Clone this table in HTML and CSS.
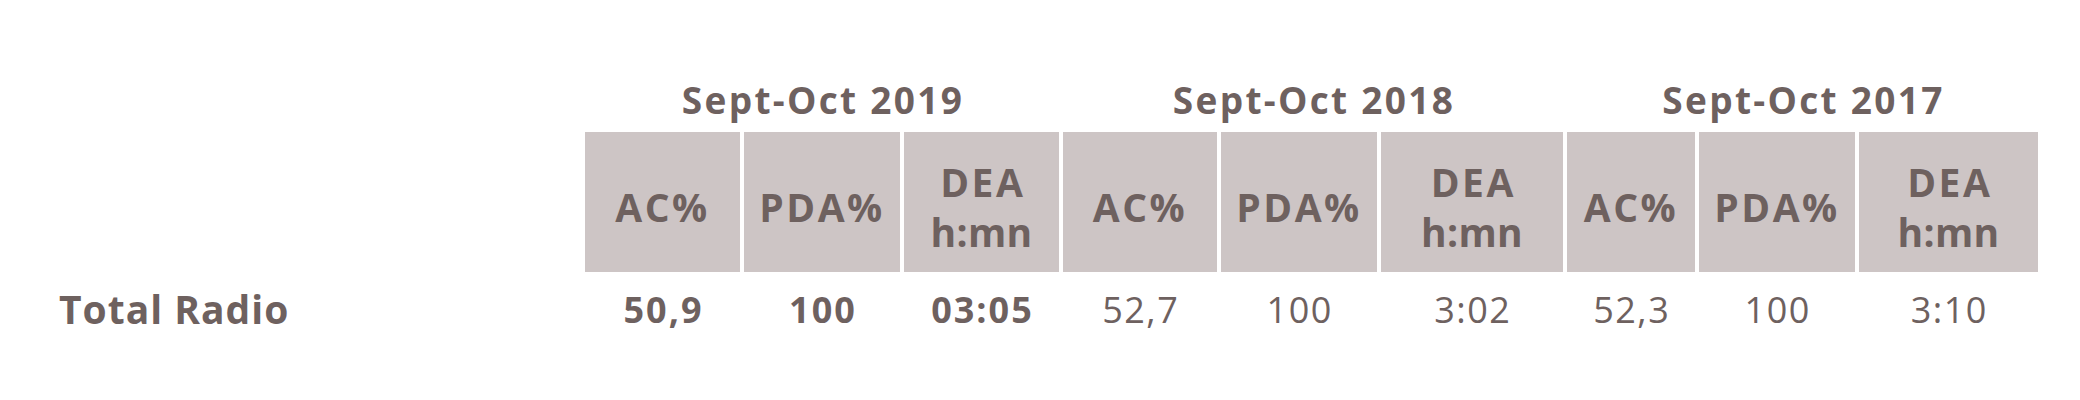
FILE: index.html
```html
<!DOCTYPE html>
<html lang="fr">
<head>
<meta charset="utf-8">
<title>Audience radio</title>
<link rel="stylesheet" href="styles.css">
</head>
<body>
<div class="grid">
  <div class="blank"></div>
  <div class="period">Sept-Oct 2019</div>
  <div class="period">Sept-Oct 2018</div>
  <div class="period">Sept-Oct 2017</div>

  <div class="blank"></div>
  <div class="head">AC%</div>
  <div class="head">PDA%</div>
  <div class="head"><span>DEA</span><span class="unit">h:mn</span></div>
  <div class="head">AC%</div>
  <div class="head">PDA%</div>
  <div class="head"><span>DEA</span><span class="unit">h:mn</span></div>
  <div class="head">AC%</div>
  <div class="head">PDA%</div>
  <div class="head"><span>DEA</span><span class="unit">h:mn</span></div>

  <div class="label">Total Radio</div>
  <div class="val strong">50,9</div>
  <div class="val strong">100</div>
  <div class="val strong">03:05</div>
  <div class="val">52,7</div>
  <div class="val">100</div>
  <div class="val">3:02</div>
  <div class="val">52,3</div>
  <div class="val">100</div>
  <div class="val">3:10</div>
</div>
</body>
</html>
```

FILE: styles.css
```css
html, body {
  margin: 0;
  background: #ffffff;
}

body {
  padding-top: 71px;
  font-family: "Open Sans", "Noto Sans", sans-serif;
  color: #6e615f;
}

.grid {
  display: grid;
  grid-template-columns: 581px 155px 156px 155px 154px 156px 182px 128px 156px 179px;
  grid-template-rows: 57px 140px 66px;
  column-gap: 4px;
  row-gap: 4px;
}

.period {
  grid-column: span 3;
  text-align: center;
  font-weight: 700;
  font-size: 37px;
  line-height: 57px;
  letter-spacing: 2.3px;
  padding-left: 2px;
  white-space: nowrap;
}

.head {
  background: #cdc5c5;
  display: flex;
  flex-direction: column;
  justify-content: center;
  align-items: center;
  padding-top: 10px;
  font-weight: 700;
  font-size: 39px;
  line-height: 50px;
  letter-spacing: 2.5px;
  white-space: nowrap;
}

.head span {
  display: block;
  padding-left: 2.5px;
}

.head .unit {
  letter-spacing: 0.3px;
  padding-left: 0;
}

.label {
  padding-left: 59px;
  font-weight: 700;
  font-size: 39px;
  line-height: 66px;
  letter-spacing: 1px;
  white-space: nowrap;
}

.val {
  text-align: center;
  font-weight: 400;
  font-size: 36px;
  line-height: 66px;
  padding-top: 1px;
  letter-spacing: 1.5px;
  padding-left: 1.5px;
  white-space: nowrap;
}

.val.strong {
  font-weight: 700;
  letter-spacing: 2px;
  padding-left: 2px;
}
```
